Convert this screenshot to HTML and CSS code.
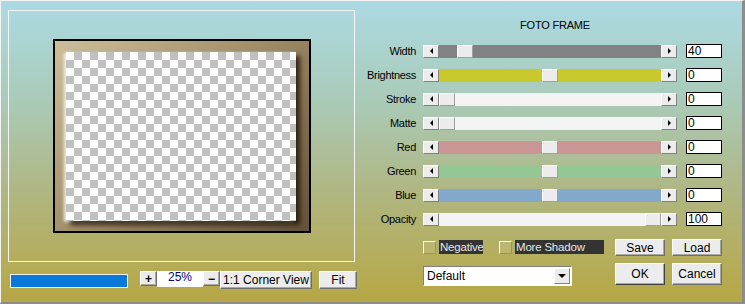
FILE: index.html
```html
<!DOCTYPE html>
<html lang="en">
<head>
    <meta charset="UTF-8">
    <title>Foto Frame</title>
    <link rel="stylesheet" href="styles.css">
</head>
<body>
    <div class="window">
        <div class="left">
            <div class="preview">
                <div class="frame">
                    <div class="checker"></div>
                </div>
            </div>
            <div class="zoom-bar">
                <div class="progress"></div>
                <button class="btn small">+</button>
                <div class="zoom-value">25%</div>
                <button class="btn small">&minus;</button>
                <button class="btn corner">1:1 Corner View</button>
                <button class="btn fit">Fit</button>
            </div>
        </div>

        <div class="right">
            <div class="title">FOTO FRAME</div>

            <div class="row">
                <span class="label">Width</span>
                <div class="slider">
                    <span class="arrow left-arrow"></span>
                    <div class="track gray"><span class="thumb" style="left: calc((100% - 16px) * 0.085)"></span></div>
                    <span class="arrow right-arrow"></span>
                </div>
                <div class="value">40</div>
            </div>
            <div class="row">
                <span class="label">Brightness</span>
                <div class="slider">
                    <span class="arrow left-arrow"></span>
                    <div class="track yellow"><span class="thumb" style="left: calc((100% - 16px) * 0.5)"></span></div>
                    <span class="arrow right-arrow"></span>
                </div>
                <div class="value">0</div>
            </div>
            <div class="row">
                <span class="label">Stroke</span>
                <div class="slider">
                    <span class="arrow left-arrow"></span>
                    <div class="track white"><span class="thumb" style="left: 0"></span></div>
                    <span class="arrow right-arrow"></span>
                </div>
                <div class="value">0</div>
            </div>
            <div class="row">
                <span class="label">Matte</span>
                <div class="slider">
                    <span class="arrow left-arrow"></span>
                    <div class="track white"><span class="thumb" style="left: 0"></span></div>
                    <span class="arrow right-arrow"></span>
                </div>
                <div class="value">0</div>
            </div>
            <div class="row">
                <span class="label">Red</span>
                <div class="slider">
                    <span class="arrow left-arrow"></span>
                    <div class="track red"><span class="thumb" style="left: calc((100% - 16px) * 0.5)"></span></div>
                    <span class="arrow right-arrow"></span>
                </div>
                <div class="value">0</div>
            </div>
            <div class="row">
                <span class="label">Green</span>
                <div class="slider">
                    <span class="arrow left-arrow"></span>
                    <div class="track green"><span class="thumb" style="left: calc((100% - 16px) * 0.5)"></span></div>
                    <span class="arrow right-arrow"></span>
                </div>
                <div class="value">0</div>
            </div>
            <div class="row">
                <span class="label">Blue</span>
                <div class="slider">
                    <span class="arrow left-arrow"></span>
                    <div class="track blue"><span class="thumb" style="left: calc((100% - 16px) * 0.5)"></span></div>
                    <span class="arrow right-arrow"></span>
                </div>
                <div class="value">0</div>
            </div>
            <div class="row">
                <span class="label">Opacity</span>
                <div class="slider">
                    <span class="arrow left-arrow"></span>
                    <div class="track white"><span class="thumb" style="left: calc(100% - 16px)"></span></div>
                    <span class="arrow right-arrow"></span>
                </div>
                <div class="value">100</div>
            </div>

            <div class="bottom">
                <div class="options">
                    <div class="checks">
                        <label class="check"><span class="box"></span><span class="check-text">Negative</span></label>
                        <label class="check"><span class="box"></span><span class="check-text wide">More Shadow</span></label>
                    </div>
                    <div class="select">
                        <span class="select-text">Default</span>
                        <span class="select-btn"></span>
                    </div>
                </div>
                <div class="actions">
                    <button class="btn act">Save</button>
                    <button class="btn act">Load</button>
                    <button class="btn act big default">OK</button>
                    <button class="btn act big">Cancel</button>
                </div>
            </div>
        </div>
    </div>
</body>
</html>
```

FILE: styles.css
```css
body {
    margin: 0;
    padding: 0;
    font-family: "Liberation Sans", Arial, sans-serif;
    font-size: 11px;
    color: #000;
}

.window {
    width: 745px;
    height: 304px;
    box-sizing: border-box;
    display: flex;
    border-style: solid;
    border-width: 1px 3px 2px 1px;
    border-color: #f4f4f4 #8c8c8c #8c8c8c #f4f4f4;
    background: linear-gradient(#acdae3 0%, #a9cbba 32%, #b0b784 62%, #b6a744 100%);
}

.left {
    width: 357px;
    padding: 9px 0 0 7px;
}

.preview {
    width: 347px;
    height: 252px;
    box-sizing: border-box;
    border: 1px solid #f4f4f4;
    display: flex;
    align-items: center;
    justify-content: center;
    padding: 0 0 1px 1px;
}

.frame {
    width: 258px;
    height: 194px;
    box-sizing: border-box;
    border: 2px solid #000;
    padding: 11px 13px 10px 11px;
    background: linear-gradient(135deg, #cdbf9c 0%, #a38f6a 45%, #64523a 100%);
}

.checker {
    width: 230px;
    height: 169px;
    background: repeating-conic-gradient(#c0c0c0 0 25%, #fff 0 50%) 0 0 / 16px 16px;
    box-shadow: 4px 4px 5px rgba(30, 20, 5, 0.85), -2px 1px 3px rgba(255, 255, 235, 0.9);
}

.zoom-bar {
    display: flex;
    align-items: flex-start;
    margin-top: 8px;
}

.progress {
    width: 118px;
    height: 14px;
    box-sizing: border-box;
    margin: 4px 12px 0 2px;
    background: #0a78d8;
    border: 1px solid #f0f0f0;
}

.btn {
    font-family: "Liberation Sans", Arial, sans-serif;
    font-size: 12px;
    color: #000;
    padding: 0;
    background: #ececec;
    border: 1px solid;
    border-color: #fff #6e6e6e #6e6e6e #fff;
    box-shadow: inset -1px -1px 0 #a8a8a8;
    box-sizing: border-box;
}

.small {
    width: 17px;
    height: 15px;
    margin-top: 1px;
    font-weight: bold;
    line-height: 12px;
}

.zoom-value {
    width: 46px;
    height: 16px;
    margin-top: 1px;
    background: #fff;
    color: #000080;
    font-size: 12px;
    text-align: center;
    line-height: 13px;
}

.corner {
    width: 92px;
    height: 18px;
    margin-top: 1px;
}

.fit {
    width: 38px;
    height: 18px;
    margin: 1px 0 0 7px;
}

.right {
    flex: 1;
}

.title {
    width: 356px;
    text-align: center;
    margin-top: 18px;
    padding-left: 12px;
    height: 20px;
    letter-spacing: -0.2px;
}

.row {
    display: flex;
    align-items: center;
    height: 24px;
}

.label {
    width: 51px;
    text-align: right;
    letter-spacing: -0.3px;
    margin-right: 7px;
}

.slider {
    display: flex;
    width: 254px;
    height: 13px;
    margin-right: 9px;
}

.arrow {
    width: 16px;
    height: 13px;
    box-sizing: border-box;
    background: #ececec;
    border: 1px solid;
    border-color: #fff #808080 #808080 #fff;
    display: flex;
    align-items: center;
    justify-content: center;
}

.arrow::before {
    content: "";
    width: 0;
    height: 0;
    border-top: 3px solid transparent;
    border-bottom: 3px solid transparent;
}

.left-arrow::before {
    border-right: 3px solid #000;
}

.right-arrow::before {
    border-left: 3px solid #000;
}

.track {
    flex: 1;
    position: relative;
}

.track.gray { background: #828282; }
.track.yellow { background: #c9c92e; }
.track.white { background: #f4f4f4; }
.track.red { background: #c99595; }
.track.green { background: #95c795; }
.track.blue { background: #82a8cc; }

.thumb {
    position: absolute;
    top: 0;
    width: 16px;
    height: 13px;
    box-sizing: border-box;
    background: #ececec;
    border: 1px solid;
    border-color: #fff #a0a0a0 #a0a0a0 #fff;
}

.value {
    width: 36px;
    height: 14px;
    box-sizing: border-box;
    border: 1px solid #000;
    background: #fff;
    font-size: 12px;
    line-height: 12px;
    padding-left: 1px;
}

.bottom {
    display: flex;
    margin-top: 8px;
}

.options {
    margin-left: 58px;
    width: 192px;
}

.checks {
    display: flex;
    height: 14px;
    margin-top: 1px;
}

.check {
    display: flex;
    align-items: center;
    margin-right: 16px;
}

.box {
    width: 13px;
    height: 13px;
    box-sizing: border-box;
    border: 1px solid;
    border-color: #fff #909090 #909090 #fff;
    background: rgba(255, 255, 255, 0.1);
    margin-right: 3px;
}

.check-text {
    background: #333;
    color: #e6e6e6;
    font-size: 11.5px;
    letter-spacing: -0.2px;
    height: 14px;
    line-height: 14px;
    width: 44px;
    padding-left: 1px;
    box-sizing: border-box;
    white-space: nowrap;
    overflow: hidden;
}

.check-text.wide {
    width: 89px;
}

.select {
    margin-top: 12px;
    width: 149px;
    height: 20px;
    box-sizing: border-box;
    background: #fff;
    border: 1px solid;
    border-color: #808080 #fff #fff #808080;
    display: flex;
    align-items: center;
    justify-content: space-between;
    padding: 0 1px 0 3px;
}

.select-text {
    font-size: 12px;
}

.select-btn {
    width: 16px;
    height: 16px;
    box-sizing: border-box;
    background: #ececec;
    border: 1px solid;
    border-color: #fff #808080 #808080 #fff;
    display: flex;
    align-items: center;
    justify-content: center;
}

.select-btn::before {
    content: "";
    width: 0;
    height: 0;
    border-left: 4px solid transparent;
    border-right: 4px solid transparent;
    border-top: 4px solid #000;
}

.actions {
    display: grid;
    grid-template-columns: 50px 50px;
    grid-template-rows: 17px 22px;
    column-gap: 7px;
    row-gap: 7px;
}

.act {
    width: 50px;
    height: 17px;
}

.act.big {
    height: 22px;
}

.act.default {
    border-color: #fff #404040 #404040 #fff;
}
```
